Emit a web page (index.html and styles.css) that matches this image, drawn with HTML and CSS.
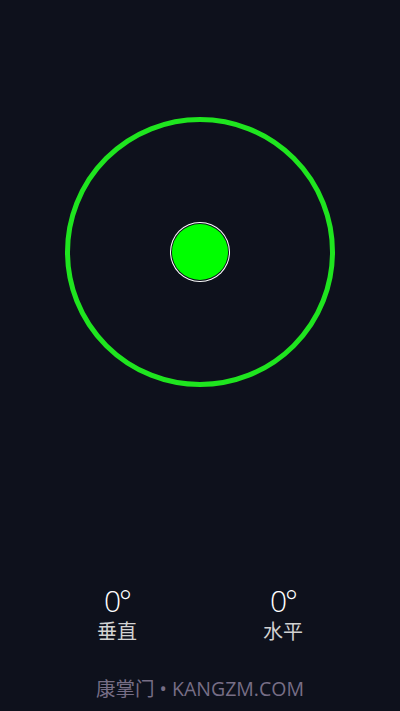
FILE: index.html
```html
<!DOCTYPE html>
<html lang="zh">
<head>
  <meta charset="UTF-8" />
  <meta name="viewport" content="width=device-width, initial-scale=1.0"/>
  <title>水平仪</title>
  <link rel="stylesheet" href="styles.css">
</head>
<body>

  <div id="level">
    <div id="ring">
      <div id="bubble"></div>
    </div>
  </div>

  <div id="readings">
    <div class="reading">
      <div class="angle">0°</div>
      <div class="label">垂直</div>
    </div>
    <div class="reading">
      <div class="angle">0°</div>
      <div class="label">水平</div>
    </div>
  </div>

  <div id="footer">康掌门 • KANGZM.COM</div>

</body>
</html>
```

FILE: styles.css
```css
body {
  margin: 0;
  height: 711px;
  background-color: #0e111c;
  font-family: 'Open Sans', 'Noto Sans CJK SC', sans-serif;
  display: flex;
  flex-direction: column;
  align-items: center;
  overflow: hidden;
}

#level {
  padding-top: 117px;
}

#ring {
  width: 260px;
  height: 260px;
  border: 5px solid #1fe51f;
  border-radius: 50%;
  display: flex;
  align-items: center;
  justify-content: center;
}

#bubble {
  width: 56px;
  height: 56px;
  border-radius: 50%;
  background-color: #00ff00;
  box-shadow: 0 0 0 1px #0e111c, 0 0 0 2px #ffffff;
}

#readings {
  margin-top: auto;
  display: flex;
  gap: 66px;
}

.reading {
  width: 100px;
  text-align: center;
}

.angle {
  color: #ffffff;
  font-size: 30px;
  font-weight: 300;
  line-height: 32px;
  letter-spacing: -2px;
}

.label {
  margin-top: 2px;
  color: #d2d2d2;
  font-size: 20px;
  line-height: 26px;
}

#footer {
  margin-top: 32px;
  margin-bottom: 10px;
  color: #776e86;
  font-size: 19.5px;
  line-height: 24px;
}
```
